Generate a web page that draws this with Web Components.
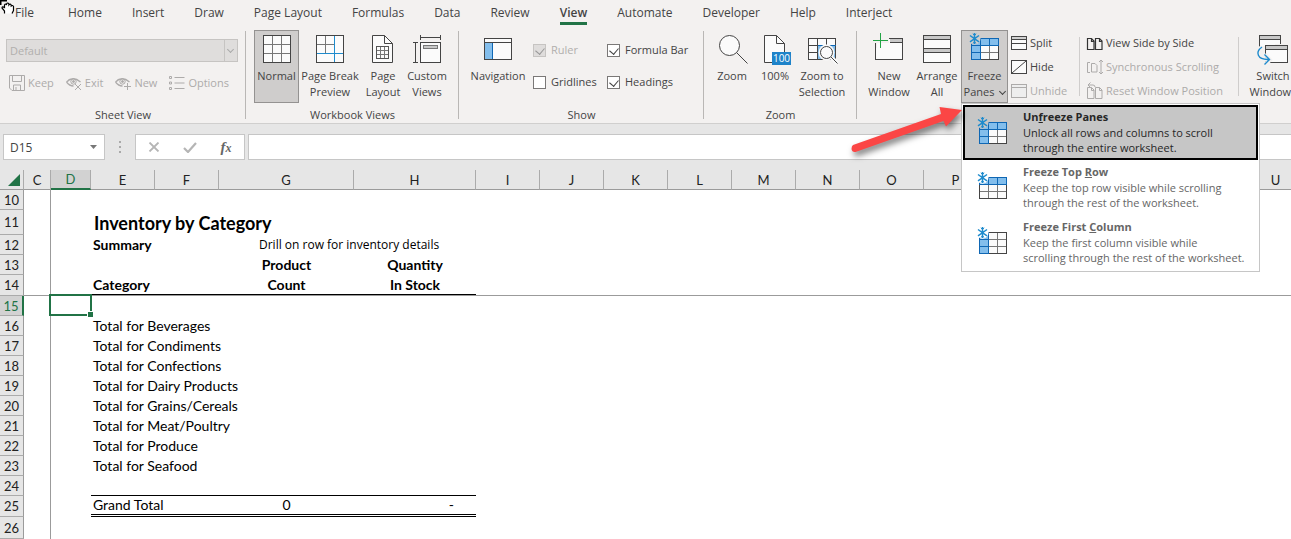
<!DOCTYPE html>
<html lang="en">
<head>
<meta charset="utf-8">
<title>Inventory by Category</title>
<style>
  body { margin: 0; background: #fff; }
</style>
</head>
<body>
<book-window>
  <hand-cursor slot="cursor"></hand-cursor>
  <ribbon-tabs slot="tabs" active="View"></ribbon-tabs>
  <ribbon-bar slot="ribbon">
    <ribbon-group label="Sheet View" style="--w:246px">
      <sheet-view-panel></sheet-view-panel>
    </ribbon-group>
    <ribbon-group label="Workbook Views" style="--w:213px;--pad:8px">
      <big-button icon="normal" pressed style="--w:45px">Normal</big-button>
      <big-button icon="pagebreak" style="--w:62px">Page Break<br>Preview</big-button>
      <big-button icon="page" style="--w:44px">Page<br>Layout</big-button>
      <big-button icon="custom" style="--w:44px">Custom<br>Views</big-button>
    </ribbon-group>
    <ribbon-group label="Show" style="--w:245px;--pad:7px">
      <big-button icon="navigation" style="--w:64px">Navigation</big-button>
      <check-grid>
        <ribbon-check checked disabled>Ruler</ribbon-check>
        <ribbon-check checked>Formula Bar</ribbon-check>
        <ribbon-check>Gridlines</ribbon-check>
        <ribbon-check checked>Headings</ribbon-check>
      </check-grid>
    </ribbon-group>
    <ribbon-group label="Zoom" style="--w:153px;--pad:7px">
      <big-button icon="zoom" style="--w:42px">Zoom</big-button>
      <big-button icon="hundred" style="--w:44px">100%</big-button>
      <big-button icon="zoomsel" style="--w:50px">Zoom to<br>Selection</big-button>
    </ribbon-group>
    <ribbon-group style="--w:460px;--pad:8px">
      <big-button icon="newwin" style="--w:48px">New<br>Window</big-button>
      <big-button icon="arrange" style="--w:48px">Arrange<br>All</big-button>
      <big-button icon="freeze" pressed caret style="--w:47px">Freeze<br>Panes
        <freeze-menu slot="popup">
          <freeze-item icon="freeze" selected>
            <span slot="title">Un<u>f</u>reeze Panes</span>
            Unlock all rows and columns to scroll<br>through the entire worksheet.
          </freeze-item>
          <freeze-item icon="freezerow">
            <span slot="title">Freeze Top <u>R</u>ow</span>
            Keep the top row visible while scrolling<br>through the rest of the worksheet.
          </freeze-item>
          <freeze-item icon="freezecol">
            <span slot="title">Freeze First <u>C</u>olumn</span>
            Keep the first column visible while<br>scrolling through the rest of the worksheet.
          </freeze-item>
        </freeze-menu>
        <red-arrow slot="popup"></red-arrow>
      </big-button>
      <button-stack style="--w:71px">
        <small-button icon="split">Split</small-button>
        <small-button icon="hide">Hide</small-button>
        <small-button icon="unhide" disabled>Unhide</small-button>
      </button-stack>
      <button-stack divided style="--w:159px">
        <small-button icon="side">View Side by Side</small-button>
        <small-button icon="sync" disabled>Synchronous Scrolling</small-button>
        <small-button icon="reset" disabled>Reset Window Position</small-button>
      </button-stack>
      <button-stack divided style="--w:72px">
        <big-button icon="switch" style="--w:60px">Switch<br>Windows</big-button>
      </button-stack>
    </ribbon-group>
  </ribbon-bar>
  <formula-bar slot="formula" cell="D15"></formula-bar>
  <sheet-grid slot="sheet"></sheet-grid>
</book-window>

<script>
const UI = '"Open Sans","Noto Sans",sans-serif';
const SHEET = 'Lato,"Open Sans",sans-serif';

function define(name, css, html, ready) {
  const template = document.createElement('template');
  template.innerHTML = `<style>*,:host{box-sizing:border-box}${css}</style>${html}`;
  customElements.define(name, class extends HTMLElement {
    constructor() {
      super();
      this.attachShadow({ mode: 'open' });
      this.shadowRoot.append(template.content.cloneNode(true));
    }
    connectedCallback() { if (ready) ready(this, this.shadowRoot); }
  });
}

/* ---------- icons ---------- */
const flake = '<path d="M5.500 0v11M1 2.500l9 6.400M10 2.500L1 8.900" stroke="#1e8bcd" stroke-width="1.500"/><path d="M3.800.8l1.700 1.600 1.700-1.600M3.800 10.400l1.700-1.600 1.700 1.600" stroke="#1e8bcd"/>';
function paneIcon(cells, edge) {
  return `<g shape-rendering="crispEdges"><rect x="2.500" y="5.500" width="27" height="21" fill="#fbfbfb" stroke="none"/>
    <path d="M11.500 5v22M20.500 5v22M2 12.500h28M2 19.500h28" stroke="#777"/>
    <rect x="2.500" y="5.500" width="27" height="21" fill="none" stroke="#444"/>${cells}<path d="${edge}" stroke="#0f67b4" fill="none"/></g>
    <circle cx="5.500" cy="5.700" r="6" fill="var(--halo,#f3f1f0)" stroke="none"/>${flake}`;
}
const pages = '<path d="M.5 3.500h4l2.500 2.500v8.500h-6.500zM8.500 3.500h4l2.500 2.500v8.500h-6.500zM4.500 3.500v3h2.500M12.500 3.500v3h2.500"/>';
const eye = '<path d="M.5 7q6.500-6.500 14 0M.5 7q3 4 7 4" stroke-width="1.300"/><circle cx="7.500" cy="6.500" r="2.700"/><circle cx="7.500" cy="6.500" r="1" fill="currentColor"/><path d="M2 5.500l1.500-1"/>';
const ICONS = {
  normal: [32, '<g shape-rendering="crispEdges"><path d="M11.500 3v27M20.500 3v27M3 11.500h27M3 20.500h27" stroke="#777"/><rect x="2.500" y="2.500" width="27" height="27" fill="none"/></g>', 1],
  pagebreak: [32, '<g shape-rendering="crispEdges"><path d="M11.500 3v17M3 11.500h17" stroke="#777"/><rect x="2.500" y="2.500" width="27" height="27" fill="none"/><path d="M20.500 3v26M3 20.500h26" stroke="#1e8bcd"/></g>', 1],
  page: [32, '<path d="M5.500 2.500h12l8 8v19h-20z" fill="#fbfbfb"/><path d="M17.500 2.500v8h8"/><g shape-rendering="crispEdges" stroke="#555"><rect x="9.500" y="13.500" width="12" height="12"/><path d="M13.500 14v11M17.500 14v11M10 17.500h11M10 21.500h11" stroke="#777"/></g>'],
  custom: [32, '<g shape-rendering="crispEdges"><rect x="9.500" y="9.500" width="20" height="20" fill="#fbfbfb"/><rect x="12.500" y="12.500" width="14" height="3" fill="#c8c8c8" stroke="#777"/><path d="M9.500 2v5M29.500 2v5M10 4.500h19M2 9.500h5M2 29.500h5M4.500 10v19"/></g>'],
  navigation: [32, '<g shape-rendering="crispEdges"><rect x="2.500" y="5.500" width="27" height="21" fill="#fbfbfb"/><rect x="3" y="10" width="7" height="16" fill="#83beec" stroke="none"/><path d="M10.500 10v16" stroke="#0f67b4"/><path d="M3 9.500h26"/></g>'],
  zoom: [32, '<circle cx="13.500" cy="12.500" r="10" fill="#fbfbfb"/><path d="M20.500 19.500L31.500 30.500"/>'],
  hundred: [32, '<path d="M5.500 2.500h12l8 8v19h-20z" fill="#fbfbfb"/><path d="M17.500 2.500v8h8"/><rect x="13" y="19" width="19" height="13" fill="#1e83c9" stroke="none"/><text x="22.500" y="29" font-size="10" text-anchor="middle" fill="#fff" stroke="none">100</text>'],
  zoomsel: [32, '<g shape-rendering="crispEdges"><rect x="2.500" y="5.500" width="27" height="21" fill="#fbfbfb"/><rect x="11" y="12" width="18" height="14" fill="#83beec" stroke="none"/><path d="M11.500 6v20M20.500 6v6M3 12.500h8M3 19.500h8"/><path d="M11.500 12.500h18" stroke="#0f67b4"/></g><circle cx="20.500" cy="19.500" r="8" fill="#f8f8f8" stroke="none"/><path d="M25 24l6.500 6.500" stroke="#f8f8f8" stroke-width="4"/><circle cx="20.500" cy="19.500" r="6" fill="#fbfbfb"/><path d="M25 24l6.500 6.500"/>'],
  newwin: [32, '<g shape-rendering="crispEdges"><rect x="2.500" y="5.500" width="27" height="21" fill="#fbfbfb"/><rect x="17" y="6" width="12" height="3" fill="#c8c8c8" stroke="none"/><path d="M17 9.500h12"/><path d="M0 0h16v15h-13v-1h-3z" fill="#f3f1f0" stroke="none"/><path d="M4 10h12v5h-12z" fill="#fbfbfb" stroke="none"/><path d="M2.500 10v5"/><path d="M7.500 0v15M0 7.500h15" stroke="#22a345"/></g>'],
  arrange: [32, '<g shape-rendering="crispEdges"><rect x="2.500" y="2.500" width="27" height="27" fill="#fbfbfb"/><rect x="3" y="3" width="26" height="3" fill="#c8c8c8" stroke="none"/><rect x="3" y="16" width="26" height="3" fill="#c8c8c8" stroke="none"/><path d="M3 6.500h26M3 15.500h26M3 19.500h26"/></g>'],
  freeze: [32, paneIcon('<path d="M3 6h26v6h-17v14h-9z" fill="#83beec" stroke="none"/>', 'M29.500 12.500v-7h-27v21h9v-21M20.500 5.500v7M2.500 12.500h27M2.500 19.500h9')],
  freezerow: [32, paneIcon('<path d="M3 6h26v6h-26z" fill="#83beec" stroke="none"/>', 'M29.500 12.500v-7h-27v7h27M11.500 5.500v7M20.500 5.500v7')],
  freezecol: [32, paneIcon('<path d="M3 6h8v20h-8z" fill="#83beec" stroke="none"/>', 'M11.500 5.500h-9v21h9zM2.500 12.500h9M2.500 19.500h9')],
  switch: [32, '<g shape-rendering="crispEdges"><path d="M2.500 14v-11.500h21v8" fill="#fbfbfb"/><rect x="3" y="3" width="20" height="3" fill="#c8c8c8" stroke="none"/><path d="M3 6.500h20"/><rect x="8.500" y="12.500" width="22" height="17" fill="#fbfbfb"/><rect x="9" y="13" width="21" height="3" fill="#c8c8c8" stroke="none"/><path d="M9 16.500h21"/></g><path d="M5 14c-7 5-5 13 7 13M8 21l5 6-5 5" stroke="#f3f1f0" stroke-width="4"/><path d="M5 14c-7 5-5 13 7 12.500M7.500 21.500l5 5-5 5" stroke="#1e8bcd" stroke-width="1.400"/>'],
  split: [16, '<g shape-rendering="crispEdges"><rect x=".5" y="1.500" width="15" height="13" fill="#fbfbfb"/><rect x="1" y="2" width="14" height="2" fill="#d0d0d0" stroke="none"/><path d="M1 4.500h14M1 8.500h14"/></g>'],
  hide: [16, '<rect x=".5" y="1.500" width="15" height="13" fill="#fbfbfb"/><path d="M1 14L15 2"/>'],
  unhide: [16, '<g shape-rendering="crispEdges"><rect x=".5" y="1.500" width="15" height="13" fill="#eee"/><path d="M1 4.500h14"/></g>'],
  side: [16, '<g stroke="#333" stroke-width="1.200">' + pages + '</g>'],
  sync: [16, '<path d="M3 3.500h-2.500v10h2.500M4.500 4.500h3.500l2 2v6.500h-5.500zM14 1v14M12 3l2-2 2 2M12 13l2 2 2-2"/>'],
  reset: [16, '<g transform="translate(0 1)">' + pages + '</g><path d="M1 2h5q2 0 2 2M3.500-.5L1 2l2.500 2.500"/>'],
  save: [16, '<path d="M.5.5h15v15h-12.500l-2.500-2.500zM3.500.5v6h9v-6M4.500 15v-5h7v5M7 15v-3"/>'],
  exit: [16, eye + '<path d="M9 9l6 6M15 9l-6 6"/>'],
  neweye: [16, eye + '<path d="M12.500 8v7M9 11.500h7"/>'],
  options: [16, '<path d="M.5 1.500h2v2h-2zM.5 7h2v2h-2zM.5 12.500h2v2h-2zM5.500 2.500h10M5.500 8h10M5.500 13.500h10"/>']
};
define('app-icon', `:host{display:block;flex:none;line-height:0;font-family:${UI}}svg{display:block;overflow:visible}`, '', (el, root) => {
  const [size, body, plate] = ICONS[el.getAttribute('name')];
  const back = plate ? '<rect x="2" y="2" width="28" height="28" fill="#fbfbfb" stroke="none"/>' : '';
  const span = document.createElement('span');
  span.innerHTML = `<svg width="${size}" height="${size}" viewBox="0 0 ${size} ${size}" fill="none" stroke="currentColor" aria-hidden="true">${back}${body}</svg>`;
  root.append(span);
});

/* ---------- frame ---------- */
define('book-window', `
  :host{display:flex;flex-direction:column;position:relative;height:100vh;overflow:hidden;background:#e6e6e6;color:#444;font:11px/16px ${UI}}
  ::slotted([slot=ribbon]){position:relative;z-index:2}
  ::slotted([slot=sheet]){flex:1;min-height:0}
`, '<slot name="tabs"></slot><slot name="ribbon"></slot><slot name="formula"></slot><slot name="sheet"></slot><slot name="cursor"></slot>');

define('hand-cursor', `:host{position:absolute;left:0;top:0}svg{display:block}`, `
  <svg width="16" height="15" viewBox="0 0 16 15" aria-hidden="true"><path d="M0 0h7v1.500H1.500V5H0z" fill="#000"/>
  <path d="M4.500 13.500v-2.500l-2.500-3q0-2 2.500-.5V5q1-2 2 0V4q1.200-2 2.400 0v1q1.200-1.600 2.300 0v1q1.500-1.200 2.300.5v4l-1.500 3" fill="#fff" stroke="#000" stroke-width="1.200"/></svg>`);

const TABS = ['File', 'Home', 'Insert', 'Draw', 'Page Layout', 'Formulas', 'Data', 'Review', 'View', 'Automate', 'Developer', 'Help', 'Interject'];
define('ribbon-tabs', `
  :host{display:block;background:#f3f1f0}
  nav{display:flex;gap:30px;padding-left:15px;height:30px}
  a{color:#444;text-decoration:none;font-size:12px;line-height:26px;height:25px;white-space:nowrap}
  a:first-child{margin-right:4px}
  a[aria-current]{font-weight:600;border-bottom:3px solid #217346}
`, '<nav aria-label="Ribbon tabs"></nav>', (el, root) => {
  root.querySelector('nav').innerHTML = TABS.map(t => `<a href="#"${t === el.getAttribute('active') ? ' aria-current="page"' : ''}>${t}</a>`).join('');
});

define('ribbon-bar', `:host{display:flex;height:94px;background:#f3f1f0;border-bottom:1px solid #d0cfce}`, '<slot></slot>');

define('ribbon-group', `
  :host{display:flex;flex-direction:column;flex:none;width:var(--w);position:relative}
  .items{display:flex;height:74px;padding-left:var(--pad,0)}
  .label{text-align:center;line-height:16px;margin-top:auto;height:16px}
  :host(:not(:last-child))::after{content:"";position:absolute;right:0;top:1px;bottom:4px;width:1px;background:#b9b7b5}
`, '<div class="items"><slot></slot></div><div class="label"></div>', (el, root) => {
  root.querySelector('.label').textContent = el.getAttribute('label') || '';
});

define('big-button', `
  :host{display:block;flex:none;width:var(--w);position:relative}
  button{display:flex;flex-direction:column;align-items:center;width:100%;height:73px;margin:0;padding:2px 0 0;border:1px solid transparent;background:none;color:#444;font:11px/16px ${UI};white-space:nowrap;text-align:center}
  :host([pressed]) button{background:#cfcdcc;border-color:#949291}
  :host([pressed]){--halo:#cfcdcc}
  .text{display:block;margin-top:3px}
  .caret{display:inline-block;width:5px;height:5px;margin:0 0 3px 3px;border:solid #444;border-width:0 1px 1px 0;transform:rotate(45deg);vertical-align:middle}
`, '<button type="button"><span class="icon"></span><span class="text"><slot></slot></span></button><slot name="popup"></slot>', (el, root) => {
  root.querySelector('.icon').innerHTML = `<app-icon name="${el.getAttribute('icon')}"></app-icon>`;
  if (el.hasAttribute('caret')) root.querySelector('.text').insertAdjacentHTML('beforeend', '<i class="caret"></i>');
});

define('small-button', `
  :host{display:block}
  button{display:flex;align-items:center;gap:3px;height:24px;margin:0;padding:0;border:0;background:none;color:#444;font:11px/16px ${UI};white-space:nowrap}
  button:disabled{color:#adabaa}
`, '<button type="button"><span class="icon"></span><span><slot></slot></span></button>', (el, root) => {
  root.querySelector('button').disabled = el.hasAttribute('disabled');
  root.querySelector('.icon').innerHTML = `<app-icon name="${el.getAttribute('icon')}"></app-icon>`;
});

define('button-stack', `
  :host{display:block;flex:none;width:var(--w);padding-left:3px;position:relative}
  :host([divided]){padding-left:8px}
  :host([divided])::before{content:"";position:absolute;left:0;top:7px;height:59px;width:1px;background:#cfcdcc}
  div{padding-top:1px}
  :host(:last-child){padding-left:5px}
  :host(:last-child) div{padding-top:0}
`, '<div><slot></slot></div>');

define('sheet-view-panel', `
  :host{display:block;flex:1;padding:9px 8px 0 6px}
  .pick{position:relative;width:232px}
  select{display:block;appearance:none;width:100%;height:23px;padding:0 3px;border:1px solid #c6c4c2;border-radius:0;background:#dfdddc;color:#b1afad;opacity:1;font:11px/16px ${UI}}
  .pick::before{content:"";position:absolute;right:13px;top:0;width:1px;height:23px;background:#c6c4c2}
  .pick::after{content:"";position:absolute;right:5px;top:8px;width:4px;height:4px;border:solid #aaa;border-width:0 1px 1px 0;transform:rotate(45deg)}
  .row{display:flex;gap:12px;padding:9px 0 0 3px}
`, `<div class="pick"><select aria-label="Sheet view" disabled><option>Default</option></select></div>
  <div class="row"><small-button icon="save" disabled>Keep</small-button><small-button icon="exit" disabled>Exit</small-button><small-button icon="neweye" disabled>New</small-button><small-button icon="options" disabled>Options</small-button></div>`);

define('check-grid', `:host{display:grid;grid-template-columns:74px 90px;grid-auto-rows:32px;padding:4px 0 0 3px}`, '<slot></slot>');

define('ribbon-check', `
  :host{display:flex;align-items:center}
  label{display:flex;align-items:center;gap:5px;white-space:nowrap}
  input{appearance:none;flex:none;width:13px;height:13px;margin:0;border:1px solid #7a7877;background:#fff;position:relative}
  input:checked::before{content:"";position:absolute;left:3px;top:1px;width:5px;height:7px;border:solid #444;border-width:0 1px 1px 0;transform:rotate(40deg)}
  input:disabled{background:#dfdddc;border-color:#c6c4c2}
  input:disabled::before{border-color:#999}
  :host([disabled]){color:#b1afad}
`, '<label><input type="checkbox"><span><slot></slot></span></label>', (el, root) => {
  const box = root.querySelector('input');
  box.checked = el.hasAttribute('checked');
  box.disabled = el.hasAttribute('disabled');
});

/* ---------- freeze panes menu ---------- */
define('freeze-menu', `:host{display:block;position:absolute;left:0;top:73px;width:299px;padding:1px;background:#fff;border:1px solid #c6c6c6;z-index:3}`, '<slot></slot>');
define('freeze-item', `
  :host{display:block;--halo:#fff}
  button{display:flex;align-items:center;width:100%;height:55px;margin:0;padding:0 0 0 12px;gap:14px;border:2px solid transparent;background:none;color:#666;font:11px/15px ${UI};text-align:left;white-space:nowrap}
  :host([selected]){--halo:#c6c6c6}
  :host([selected]) button{background:#c6c6c6;border-color:#000;color:#262626}
  .words{padding-bottom:2px}
  b{display:block;font-weight:700;line-height:16px}
`, '<button type="button" role="menuitem"><span class="icon"></span><span class="words"><b><slot name="title"></slot></b><slot></slot></span></button>', (el, root) => {
  root.querySelector('.icon').innerHTML = `<app-icon name="${el.getAttribute('icon')}"></app-icon>`;
});
define('red-arrow', `:host{position:absolute;right:42px;top:70px;z-index:4;pointer-events:none}svg{display:block;overflow:visible;filter:drop-shadow(2px 4px 3px rgba(0,0,0,.5))}`, `
  <svg width="116" height="56" viewBox="0 0 116 56" aria-hidden="true"><path d="M3 45L91 14l-1.500-7L112 10 96 26.500l-2.500-5.500L5.500 52q-3.500.5-4-3 0-3 1.500-4z" fill="#fb4645"/></svg>`);

/* ---------- formula bar ---------- */
define('formula-bar', `
  :host{display:flex;align-items:center;height:46px;padding:0 0 0 3px;font:12px/16px ${UI}}
  .box{display:flex;align-items:center;height:26px;background:#fff;border:1px solid #c6c6c6}
  .name{width:102px}
  input{flex:1;min-width:0;height:24px;border:0;padding:0 6px;background:none;color:#444;font:inherit;outline:0}
  button{border:0;background:none;padding:0;margin:0;display:grid;place-items:center;height:24px}
  .name button{width:21px}
  .dots{display:grid;gap:3px;margin:0 14px}
  .dots i{width:2px;height:2px;background:#a9a9a9}
  .acts{width:110px;justify-content:space-around}
  .acts button{width:30px}
  .fx{font:italic bold 15px/20px "Liberation Serif",serif;color:#666}
  .fx small{font-size:12px}
  .entry{flex:1;margin-left:3px;border-right:0}
`, `<div class="box name"><input aria-label="Name box"><button type="button" aria-label="Open name list"><svg width="7" height="4" viewBox="0 0 7 4"><path d="M0 0h7L3.500 4z" fill="#777"/></svg></button></div>
  <div class="dots"><i></i><i></i><i></i></div>
  <div class="box acts">
    <button type="button" aria-label="Cancel"><svg width="12" height="10" viewBox="0 0 12 10"><path d="M1.500.5l9 9M10.500.5l-9 9" stroke="#b5b5b5" stroke-width="1.800"/></svg></button>
    <button type="button" aria-label="Enter"><svg width="14" height="11" viewBox="0 0 14 11"><path d="M1 6l4 4 8-9" fill="none" stroke="#b5b5b5" stroke-width="2.200"/></svg></button>
    <button type="button" class="fx" aria-label="Insert function"><span>f<small>x</small></span></button>
  </div>
  <div class="box entry"><input aria-label="Formula"></div>`, (el, root) => {
  root.querySelector('input').value = el.getAttribute('cell');
});

/* ---------- sheet ---------- */
const COLS = [['C', 27], ['D', 40], ['E', 64], ['F', 64], ['G', 135], ['H', 122], ...'IJKLMNOPQRSTU'.split('').map(c => [c, 64])];
const TOTALS = { 16: 'Beverages', 17: 'Condiments', 18: 'Confections', 19: 'Dairy Products', 20: 'Grains/Cereals', 21: 'Meat/Poultry', 22: 'Produce', 23: 'Seafood' };
const CELLS = {
  E11: ['Inventory by Category', 'title'], E12: ['Summary', 'bold'], G12: ['Drill on row for inventory details', 'note'],
  G13: ['Product', 'bold mid'], H13: ['Quantity', 'bold mid'], E14: ['Category', 'bold'], G14: ['Count', 'bold mid'], H14: ['In Stock', 'bold mid'],
  E25: ['Grand Total', ''], G25: ['0', 'mid'], H25: ['-', 'num']
};
for (const r in TOTALS) CELLS['E' + r] = ['Total for ' + TOTALS[r], ''];
const HEIGHTS = { 11: 25, 14: 21, 25: 21, 26: 22 };

define('sheet-grid', `
  :host{display:block;overflow:hidden;background:#fff;color:#000;font:14px/18px ${SHEET}}
  table{table-layout:fixed;border-collapse:separate;border-spacing:0;width:1308px}
  th,td{padding:0;white-space:nowrap}
  th{font-weight:400;font-size:13px;background:#e6e6e6;color:#222;text-align:center;border:solid #ababab;border-width:0 1px 1px 0}
  thead th{height:20px;border-bottom-color:#9b9b9b}
  thead th:first-child svg{display:block;margin:1px 3px 0 auto}
  th.on{background:#d2d2d2;color:#217346}
  thead th.on{border-bottom:2px solid #217346}
  tbody th.on{border-right:2px solid #217346}
  tbody th{border-right-color:#9b9b9b}
  td{padding-left:2px;position:relative}
  td.C{border-right:1px solid #9b9b9b}
  .bold{font-weight:700}
  .title{font-weight:700;font-size:18px;padding-left:3px}
  .note{font:12px/18px ${UI};padding-left:40px}
  .mid{text-align:center;padding:0}
  .num{text-align:right;padding-right:22px}
  .r14 td{border-bottom:1px solid #9b9b9b}
  .r14 .band{box-shadow:inset 0 -1px #000}
  .r24 .band{border-bottom:1px solid #000}
  .r25 .band{border-bottom:3px double #000}
  .pick{position:absolute;left:-2px;top:-2px;right:-1px;bottom:0;border:2px solid #217346}
  .pick::after{content:"";position:absolute;right:-3px;bottom:-3px;width:5px;height:5px;background:#217346;outline:1px solid #fff}
`, '<table><colgroup></colgroup><thead></thead><tbody></tbody></table>', (el, root) => {
  root.querySelector('colgroup').innerHTML = '<col style="width:24px">' + COLS.map(([, w]) => `<col style="width:${w}px">`).join('');
  root.querySelector('thead').innerHTML = '<tr><th aria-label="Select all"><svg width="12" height="12" viewBox="0 0 12 12"><path d="M12 0v12H0z" fill="#217346"/></svg></th>'
    + COLS.map(([c]) => `<th scope="col"${c === 'D' ? ' class="on"' : ''}>${c}</th>`).join('') + '</tr>';
  let rows = '';
  for (let r = 10; r <= 26; r++) {
    rows += `<tr class="r${r}" style="height:${HEIGHTS[r] || 20}px"><th scope="row"${r === 15 ? ' class="on"' : ''}>${r}</th>`;
    for (const [c] of COLS) {
      const [text, kind] = CELLS[c + r] || ['', ''];
      const band = 'EFGH'.includes(c) ? 'band' : '';
      rows += `<td class="${[c, kind, band].join(' ').trim()}">${text}${c + r === 'D15' ? '<div class="pick"></div>' : ''}</td>`;
    }
    rows += '</tr>';
  }
  root.querySelector('tbody').innerHTML = rows;
});
</script>
</body>
</html>
